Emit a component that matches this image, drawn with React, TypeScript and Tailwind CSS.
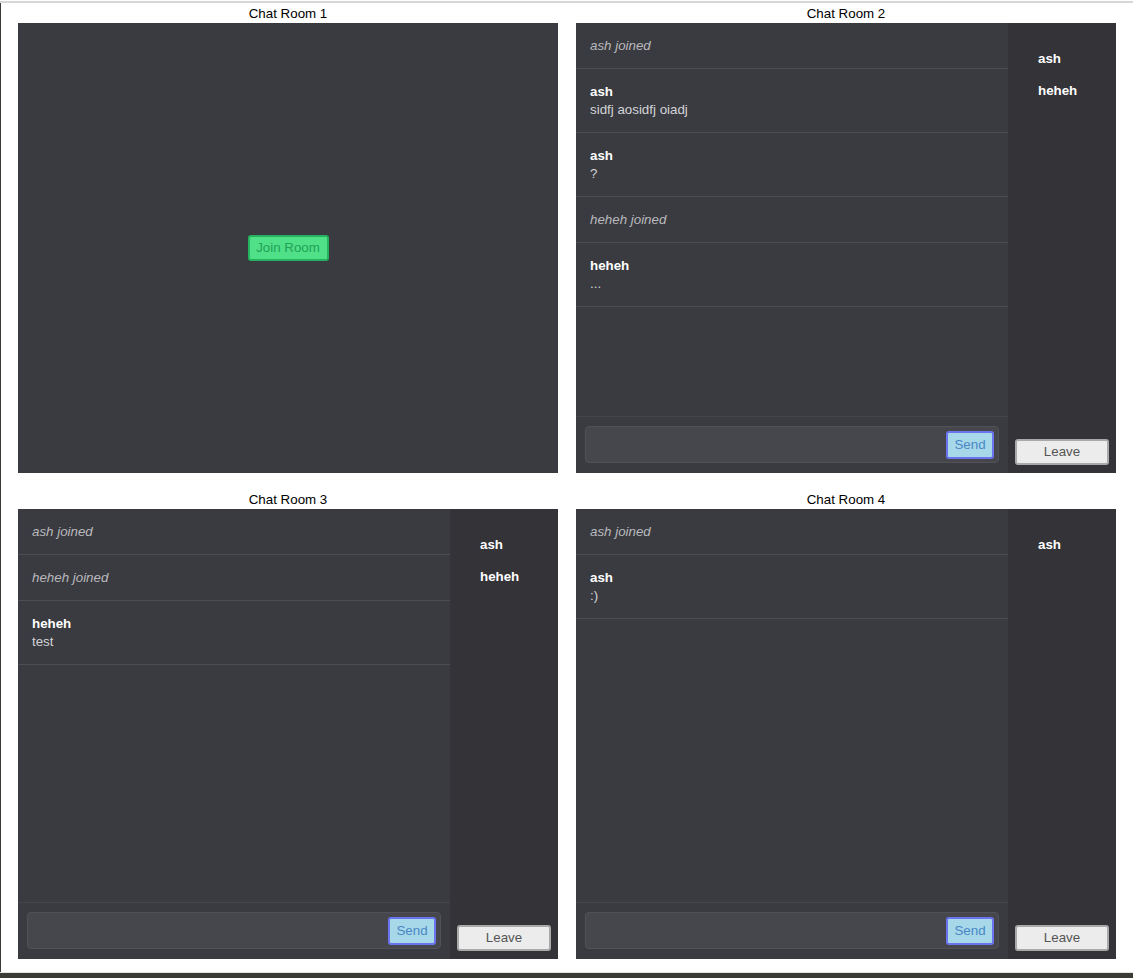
type Msg = { kind: "system"; text: string } | { kind: "chat"; from: string; text: string };

type Room = {
  title: string;
  joined: boolean;
  messages: Msg[];
  users: string[];
};

const rooms: Room[] = [
  { title: "Chat Room 1", joined: false, messages: [], users: [] },
  {
    title: "Chat Room 2",
    joined: true,
    messages: [
      { kind: "system", text: "ash joined" },
      { kind: "chat", from: "ash", text: "sidfj aosidfj oiadj" },
      { kind: "chat", from: "ash", text: "?" },
      { kind: "system", text: "heheh joined" },
      { kind: "chat", from: "heheh", text: "..." },
    ],
    users: ["ash", "heheh"],
  },
  {
    title: "Chat Room 3",
    joined: true,
    messages: [
      { kind: "system", text: "ash joined" },
      { kind: "system", text: "heheh joined" },
      { kind: "chat", from: "heheh", text: "test" },
    ],
    users: ["ash", "heheh"],
  },
  {
    title: "Chat Room 4",
    joined: true,
    messages: [
      { kind: "system", text: "ash joined" },
      { kind: "chat", from: "ash", text: ":)" },
    ],
    users: ["ash"],
  },
];

function MessageRow({ msg }: { msg: Msg }) {
  if (msg.kind === "system") {
    return (
      <div className="px-[14px] pt-[14px] pb-[13px] border-b border-[#4c4d53] leading-[18px] italic text-[#b9b9bd]">
        {msg.text}
      </div>
    );
  }
  return (
    <div className="px-[14px] pt-[14px] pb-[13px] border-b border-[#4c4d53] leading-[18px]">
      <div className="font-bold text-white">{msg.from}</div>
      <div className="text-[#d4d4d8]">{msg.text}</div>
    </div>
  );
}

function ChatPanel({ room }: { room: Room }) {
  if (!room.joined) {
    return (
      <div className="h-[450px] bg-[#3a3b40] flex items-center justify-center">
        <button className="h-[26px] w-[81px] bg-[#4fe088] border-2 border-[#25b35f] rounded-[3px] text-[#23a257] leading-none">
          Join Room
        </button>
      </div>
    );
  }
  return (
    <div className="h-[450px] flex">
      <div className="w-[432px] bg-[#3a3b40] flex flex-col">
        <div className="flex-1">
          {room.messages.map((m, i) => (
            <MessageRow key={i} msg={m} />
          ))}
        </div>
        <div className="h-[57px] border-t border-[#45464b] p-[9px]">
          <div className="h-[37px] bg-[#46474c] border border-[#515257] rounded-[4px] flex items-center justify-end pr-[4px]">
            <button className="h-[28px] w-[48px] bg-[#a6d8ea] border-2 border-[#6b74ee] rounded-[3px] text-[#4a87c4] leading-none">
              Send
            </button>
          </div>
        </div>
      </div>
      <div className="flex-1 bg-[#333338] flex flex-col px-[7px] pb-[8px]">
        <ul className="flex-1 pt-[27px] pl-[23px] flex flex-col gap-[14px]">
          {room.users.map((u) => (
            <li key={u} className="font-bold text-white leading-[18px]">
              {u}
            </li>
          ))}
        </ul>
        <button className="h-[26px] w-full bg-[#ececec] border-2 border-[#a9a9a9] rounded-[3px] text-[#555] leading-none">
          Leave
        </button>
      </div>
    </div>
  );
}

export default function App() {
  return (
    <div className="h-[978px] w-[1133px] bg-white flex flex-col text-[13.33px] font-['Liberation_Sans',Arial,sans-serif] overflow-hidden">
      <div className="h-px bg-white" />
      <div className="h-[2px] bg-[#d6d6d6]" />
      <div className="flex-1 border-l border-[#3b3b36] pl-[17px] pr-[17px]">
        <div className="grid grid-cols-[540px_540px] gap-x-[18px] gap-y-[16px]">
          {rooms.map((room) => (
            <div key={room.title}>
              <div className="h-[20px] pt-[2px] flex items-center justify-center text-black">{room.title}</div>
              <ChatPanel room={room} />
            </div>
          ))}
        </div>
      </div>
      <div className="h-px bg-[#e4e4e0]" />
      <div className="h-[5px] bg-[#3b3b36]" />
    </div>
  );
}
